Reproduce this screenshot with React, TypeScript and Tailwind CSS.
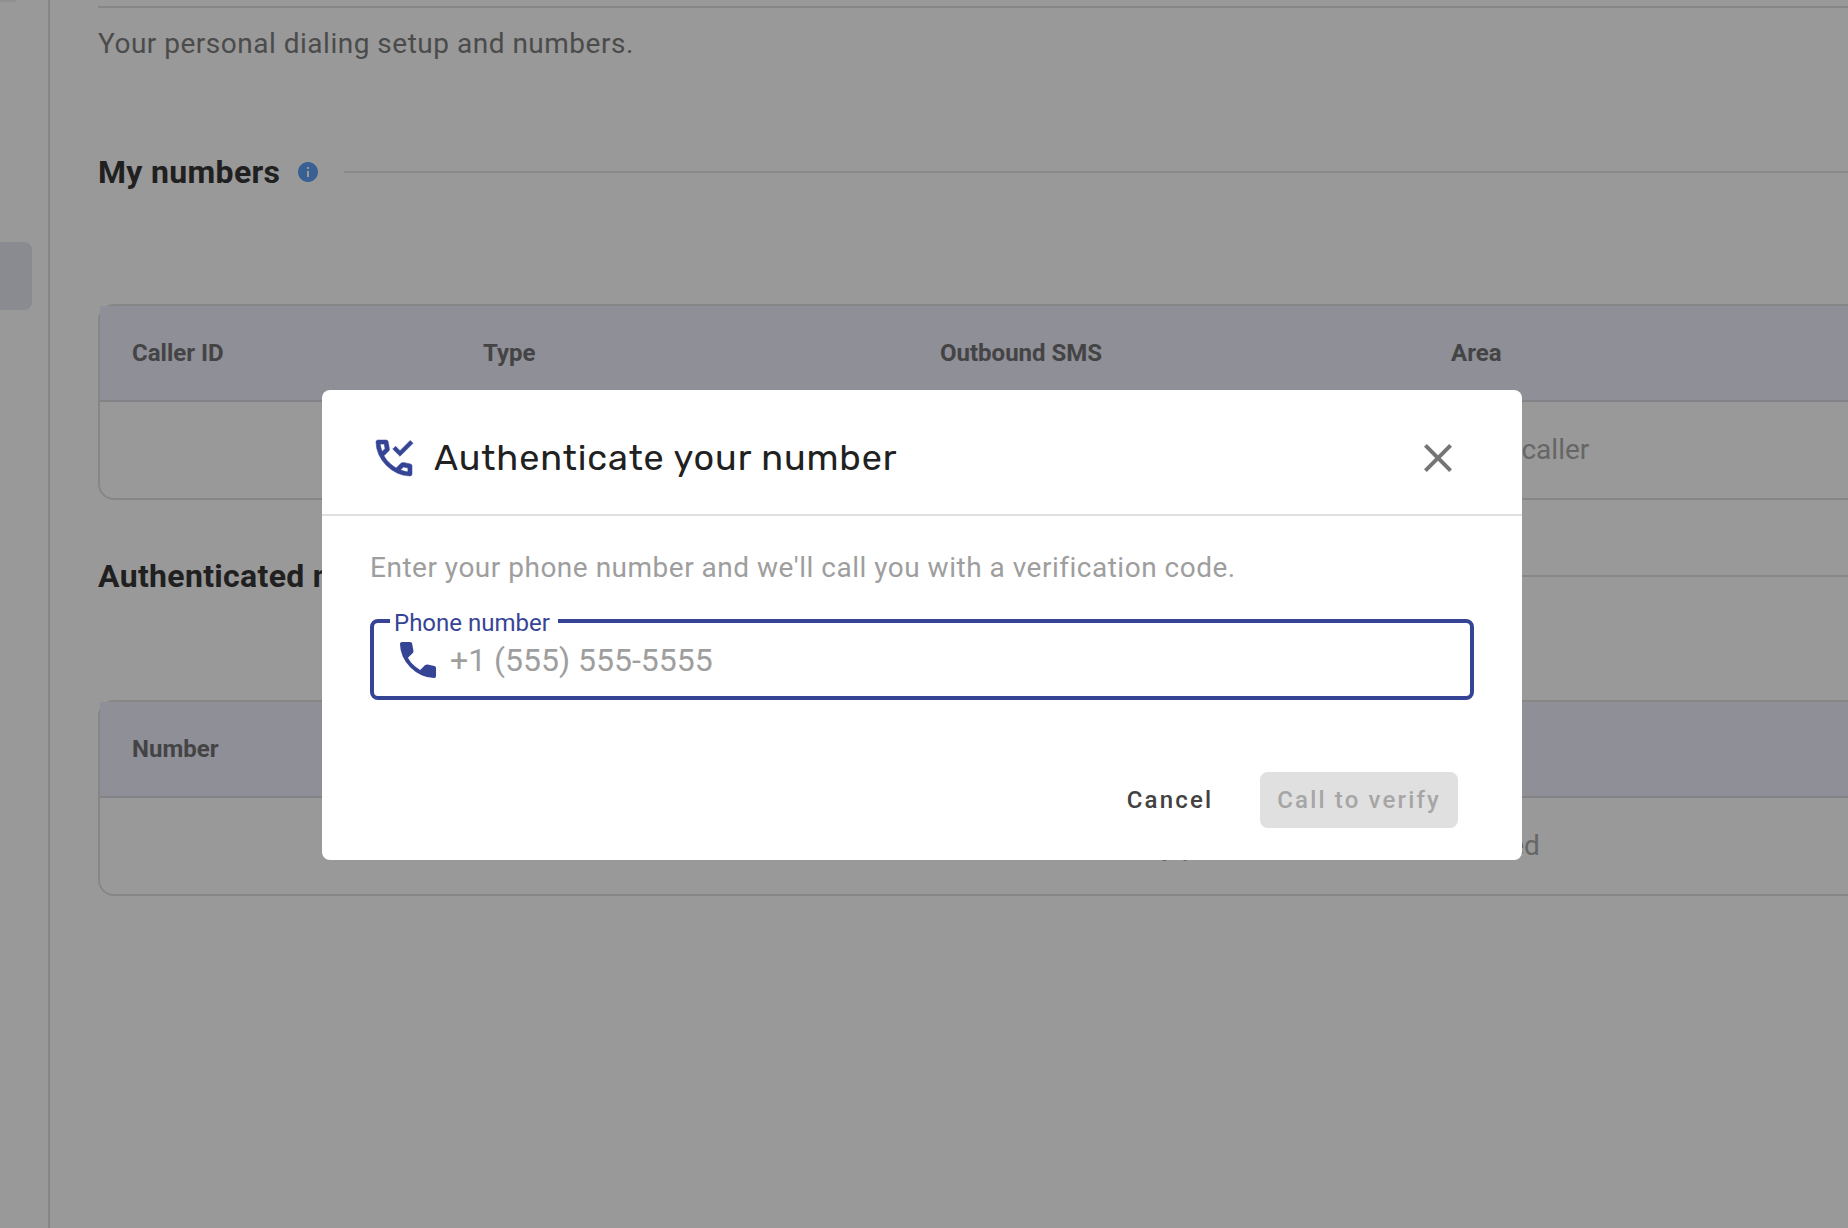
import React from "react";

const CALL =
  "M798-120q-125 0-247-54.5T329-329Q229-429 174.5-551T120-798q0-18 12-30t30-12h162q14 0 25 9.5t13 22.5l26 140q2 16-1 27t-11 19l-97 98q20 37 47.5 71.5T387-386q31 31 65 57.5t72 48.5l94-94q9-9 23.5-13.5T670-390l138 28q14 4 23 14.5t9 23.5v162q0 18-12 30t-30 12Z";

function PhoneIcon() {
  return (
    <svg viewBox="0 -960 960 960" className="size-12 shrink-0 fill-current" aria-hidden="true">
      <path d={CALL} />
    </svg>
  );
}

function PhoneCheckIcon() {
  return (
    <svg
      viewBox="0 -960 960 960"
      className="size-12 shrink-0 fill-current stroke-current"
      strokeWidth="10"
      aria-hidden="true"
    >
      <path
        fillRule="evenodd"
        d={CALL + "M244-612l56-58-16-88h-78q4 38 14 76t24 70ZM612-244l58-54 88 18v74q-40-3-76-12t-70-26Z"}
      />
      <path d="M600-513 454-659l57-57 89 89 204-204 57 57Z" />
    </svg>
  );
}

function CloseIcon() {
  return (
    <svg viewBox="0 0 24 24" className="size-12 fill-current" aria-hidden="true">
      <path d="M19 6.41 17.59 5 12 10.59 6.41 5 5 6.41 10.59 12 5 17.59 6.41 19 12 13.41 17.59 19 19 17.59 13.41 12z" />
    </svg>
  );
}

function InfoIcon() {
  return (
    <svg viewBox="2 2 20 20" className="ml-[18px] size-5 shrink-0 fill-[#5ea0f5]" aria-label="Info">
      <path d="M12 2C6.48 2 2 6.48 2 12s4.48 10 10 10 10-4.48 10-10S17.52 2 12 2zm1 15h-2v-6h2v6zm0-8h-2V7h2v2z" />
    </svg>
  );
}

function SectionHeading({ title, info }: { title: string; info?: boolean }) {
  return (
    <div className="flex items-center">
      <h2 className="text-[32px] leading-10 font-bold tracking-[0.01em] text-[#363636]">{title}</h2>
      {info && <InfoIcon />}
      <div className="ml-[26px] h-0.5 flex-1 bg-[#e3e3e3]" />
    </div>
  );
}

const COLUMN_WIDTHS = ["w-[351px]", "w-[457px]", "w-[511px]", "w-auto"];

function NumbersTable({ columns, empty }: { columns: string[]; empty: string }) {
  return (
    <table className="w-[2288px] table-fixed border-separate border-spacing-0 rounded-2xl border-2 border-[#e0e0e0]">
      <thead>
        <tr>
          {columns.map((c, i) => (
            <th
              key={c}
              className={`${COLUMN_WIDTHS[i]} h-24 border-b-2 border-[#d9d9e2] bg-[#eeeefd] pl-8 text-left text-2xl font-bold text-[#727274]`}
            >
              {c}
            </th>
          ))}
        </tr>
      </thead>
      <tbody>
        <tr>
          <td colSpan={columns.length} className="h-24 text-center text-[28px] text-[#aaaaaa]">
            {empty}
          </td>
        </tr>
      </tbody>
    </table>
  );
}

export default function App() {
  return (
    <div className="relative flex h-screen overflow-hidden bg-white font-['Roboto',sans-serif]">
      <nav className="w-[50px] shrink-0 border-r-2 border-[#e0e0e0]">
        <div className="h-0.5 w-4 rounded-br-sm bg-[#f0f0f0]" />
        <div className="mt-60 h-[68px] w-8 rounded-r-lg bg-[#e6e8f2]" />
      </nav>
      <main className="min-w-0 flex-1 overflow-hidden pt-1.5 pl-12">
        <hr className="border-t-2 border-[#e0e0e0]" />
        <p className="mt-4 text-[28px] leading-10 tracking-[0.018em] text-[#7e7e7e]">
          Your personal dialing setup and numbers.
        </p>
        <section className="mt-22">
          <SectionHeading title="My numbers" info />
          <div className="mt-28">
            <NumbersTable
              columns={["Caller ID", "Type", "Outbound SMS", "Area"]}
              empty="You do not have any other numbers set up as your caller"
            />
          </div>
        </section>
        <section className="mt-14">
          <SectionHeading title="Authenticated numbers" />
          <div className="mt-26">
            <NumbersTable columns={["Number"]} empty="You don't have any phone number authenticated" />
          </div>
        </section>
      </main>

      <div className="fixed inset-0 flex items-center justify-center bg-black/40 pt-[22px] pr-1">
        <div
          role="dialog"
          aria-modal="true"
          aria-labelledby="dialog-title"
          className="w-full max-w-[1200px] rounded-lg bg-white"
        >
          <header className="flex items-center gap-4 border-b-2 border-[#e0e0e0] pt-11 pr-15 pb-8 pl-12 text-[#364496]">
            <PhoneCheckIcon />
            <h1
              id="dialog-title"
              className="flex-1 font-['Rubik','Inter',sans-serif] text-4xl tracking-wide text-[#212121]"
            >
              Authenticate your number
            </h1>
            <button type="button" aria-label="Close" className="text-[#757575]">
              <CloseIcon />
            </button>
          </header>
          <form className="px-12 pt-8 pb-8">
            <p className="text-[28px] leading-10 tracking-[0.018em] text-[#9e9e9e]">
              Enter your phone number and we'll call you with a verification code.
            </p>
            <fieldset className="mt-[19px] h-[93px] rounded-lg border-4 border-[#364496] px-4 text-[#364496]">
              <legend className="pt-1 pr-2 pl-1 text-2xl leading-6">
                <label htmlFor="phone">Phone number</label>
              </legend>
              <div className="flex items-center gap-2 pt-px pl-1">
                <PhoneIcon />
                <input
                  id="phone"
                  type="tel"
                  placeholder="+1 (555) 555-5555"
                  className="h-12 min-w-0 flex-1 text-[32px] outline-none placeholder:text-[#9e9e9e]"
                />
              </div>
            </fieldset>
            <div className="mt-18 flex justify-end gap-[30px] pr-4">
              <button
                type="button"
                className="h-14 rounded-lg px-[17px] text-2xl font-medium tracking-[0.09em] text-[#424242]"
              >
                Cancel
              </button>
              <button
                type="submit"
                disabled
                className="h-14 rounded-lg bg-[#e0e0e0] px-[17px] text-2xl font-medium tracking-[0.09em] text-[#a6a6a6]"
              >
                Call to verify
              </button>
            </div>
          </form>
        </div>
      </div>
    </div>
  );
}
